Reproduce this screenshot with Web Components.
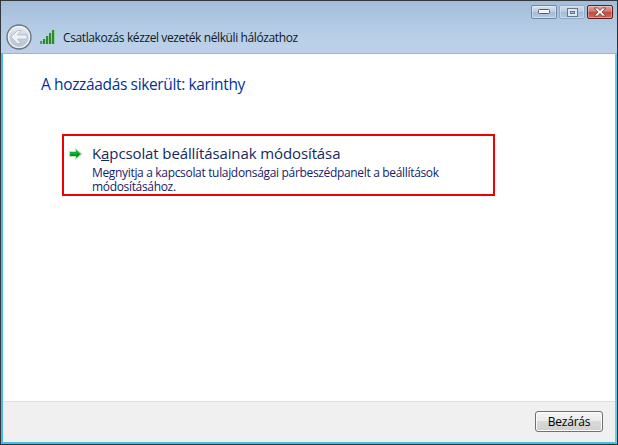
<!DOCTYPE html>
<html lang="hu"><head><meta charset="utf-8"><title>Csatlakozás</title>
<style>
html,body{margin:0;padding:0;background:#fff}
body{width:618px;height:445px;overflow:hidden;font-family:"Open Sans","Noto Sans",sans-serif}
</style></head><body>
<wizard-window>
  <caption-buttons slot="caption"></caption-buttons>
  <wizard-nav slot="nav">Csatlakozás kézzel vezeték nélküli hálózathoz</wizard-nav>
  <wizard-heading>A hozzáadás sikerült: karinthy</wizard-heading>
  <command-link>
    <span slot="title">K<u>a</u>pcsolat beállításainak módosítása</span>
    Megnyitja a kapcsolat tulajdonságai párbeszédpanelt a beállítások módosításához.
  </command-link>
  <aero-button slot="footer">Bezárás</aero-button>
</wizard-window>
<script>
function def(name,html){customElements.define(name,class extends HTMLElement{constructor(){super();this.attachShadow({mode:'open'}).innerHTML=html}})}
def('wizard-window',`<style>
:host{display:flex;flex-direction:column;box-sizing:border-box;width:618px;height:445px;border:1px solid #33383d;border-right-color:#2c3035;border-bottom-color:#2c3035;background:#b9cfe7;overflow:hidden}
.chrome{flex:none;height:52px;display:flex;flex-direction:column;background:linear-gradient(180deg,#a3bcd8 0,#b0c8e2 20px,#bad0e8 40px,#bcd1e9 52px)}
.cap{flex:none;height:22px;display:flex;justify-content:flex-end;padding:4px 4px 0 0;box-sizing:border-box}
.nav{flex:1;min-height:0}
.inner{flex:1;min-height:0;display:flex;flex-direction:column;background:#fff;border-style:solid;border-color:#4fb6e6;border-width:0 2px 2px 2px;border-bottom-color:#45c0e4;border-right-color:#6cc7ea}
.sep{flex:none;height:1px;background:#a0b5cc}
.main{flex:1;min-height:0}
.foot{flex:none;height:41px;box-sizing:border-box;background:#f0f0f0;border-top:1px solid #dfdfdf;display:flex;justify-content:flex-end;align-items:flex-start;padding:9px 12px 0 0}
</style>
<div class="chrome"><div class="cap"><slot name="caption"></slot></div><div class="nav"><slot name="nav"></slot></div></div>
<div class="inner"><div class="sep"></div><div class="main"><slot></slot></div><div class="foot"><slot name="footer"></slot></div></div>`);
def('caption-buttons',`<style>
:host{display:flex;gap:2px}
.b{box-sizing:border-box;height:14px;border-radius:2px;border:1px solid #6f87a5;background:linear-gradient(180deg,#d7e3f0 0,#bdd0e5 45%,#a4bad4 50%,#b7cbe1 100%);display:flex;align-items:center;justify-content:center;box-shadow:inset 0 0 0 1px rgba(255,255,255,.35)}
.min{width:26px}.max{width:26px;border-color:#8fa6c0;opacity:.85}
.cl{width:26px;border-color:#5e1b1f;background:linear-gradient(180deg,#e4a49a 0,#d2786b 45%,#bd4a3d 50%,#cf6f5f 100%)}
svg{display:block}
</style>
<div class="b min"><svg width="12" height="6" viewBox="0 0 12 6"><rect x=".5" y=".5" width="11" height="4" rx="1" fill="#f4f6f8" stroke="#4c5e76"/></svg></div>
<div class="b max"><svg width="11" height="9" viewBox="0 0 11 9"><rect x=".5" y=".5" width="10" height="8" fill="#e9eef4" stroke="#5a6b80"/><rect x="3.5" y="3.5" width="4" height="2" fill="#a9bdd3" stroke="#5a6b80"/></svg></div>
<div class="b cl"><svg width="14" height="10" viewBox="0 0 14 10"><path d="M1 1h3.5L7 3.400 9.500 1H13L9 5l4 4H9.500L7 6.600 4.500 9H1l4-4z" fill="#f4f1f0" stroke="#6d3a38" stroke-width=".8"/></svg></div>`);
def('wizard-nav',`<style>
:host{display:flex;align-items:center;height:100%;box-sizing:border-box;padding:0 0 2px 5px;font-size:12px;color:#101820;font-family:"Open Sans","Noto Sans",sans-serif}
.back{flex:none;display:block;margin-right:8px}
.sig{flex:none;display:block;margin-right:7px}
.t{letter-spacing:-.39px;white-space:nowrap}
</style>
<svg class="back" width="26" height="26" viewBox="0 0 26 26"><defs><linearGradient id="g" x1="0" y1="0" x2="0" y2="1"><stop offset="0" stop-color="#eef1f5"/><stop offset=".5" stop-color="#c6d1dd"/><stop offset="1" stop-color="#b4c2d2"/></linearGradient></defs><circle cx="13" cy="13" r="12" fill="url(#g)" stroke="#6d7682" stroke-width="1.4"/><circle cx="13" cy="13" r="10.500" fill="none" stroke="#f1f4f7" stroke-width="1.200"/><path d="M5 13l6.500-6.500h3.500l-3.500 4.500H21v4h-9.500l3.500 4.500h-3.500z" fill="#eef2f6" stroke="#a8b5c4" stroke-width=".7"/></svg>
<svg class="sig" width="16" height="14" viewBox="0 0 16 14"><rect x="0" y="11" width="15" height="3" fill="#5faa5f" opacity=".5"/><g fill="#2f8a35"><rect x="0" y="11" width="2" height="3" fill="#4aa04a"/><rect x="3" y="9" width="2" height="5"/><rect x="6" y="6" width="2" height="8"/><rect x="9" y="3" width="2" height="11"/><rect x="12" y="0" width="3" height="14"/></g><g fill="#8fd08f"><rect x="5" y="9" width="1" height="5"/><rect x="8" y="6" width="1" height="8"/><rect x="11" y="3" width="1" height="11"/><rect x="14" y="0" width="1" height="14"/></g></svg>
<span class="t"><slot></slot></span>`);
def('wizard-heading',`<style>
:host{display:block;padding:20px 0 0 38px;font-size:15.5px;letter-spacing:-.36px;line-height:21px;height:21px;color:#003399;font-family:"Open Sans","Noto Sans",sans-serif;white-space:nowrap}
</style><slot></slot>`);
def('command-link',`<style>
:host{display:flex;box-sizing:border-box;width:433px;height:62px;margin:39px 0 0 59px;border:2px solid #f00000;color:#151c6a;font-family:"Open Sans","Noto Sans",sans-serif}
.ic{flex:none;display:block;margin:11px 9px 0 4px}
.tx{display:flex;flex-direction:column;padding-top:7px;min-width:0}
.ti{font-size:15px;letter-spacing:-.11px;line-height:20px;color:#15285f;white-space:nowrap}
.de{font-size:12px;letter-spacing:-.33px;line-height:14px;width:360px;color:#151c6a;margin-top:3px}
</style>
<svg class="ic" width="15" height="14" viewBox="0 0 15 14"><path d="M1 4h6V.8L14.500 7 7 13.200V10H1z" fill="#bfe3bf"/><path d="M2 5h6V2.800L13 7l-5 4.200V9H2z" fill="#15b02e"/><path d="M2 7.500h7V6l2.500 1.200L9 10V9H2z" fill="#0a8a20"/></svg>
<div class="tx"><div class="ti"><slot name="title"></slot></div><div class="de"><slot></slot></div></div>`);
def('aero-button',`<style>
:host{display:flex;align-items:center;justify-content:center;box-sizing:border-box;width:68px;height:21px;border:1px solid #707070;border-radius:3px;background:linear-gradient(180deg,#f4f4f4 0,#ebebeb 48%,#d9d9d9 50%,#cfcfcf 100%);box-shadow:inset 0 0 0 1px #fbfbfb;font-size:12px;letter-spacing:-.2px;color:#000;font-family:"Open Sans","Noto Sans",sans-serif}
</style><slot></slot>`);
</script>
</body></html>
